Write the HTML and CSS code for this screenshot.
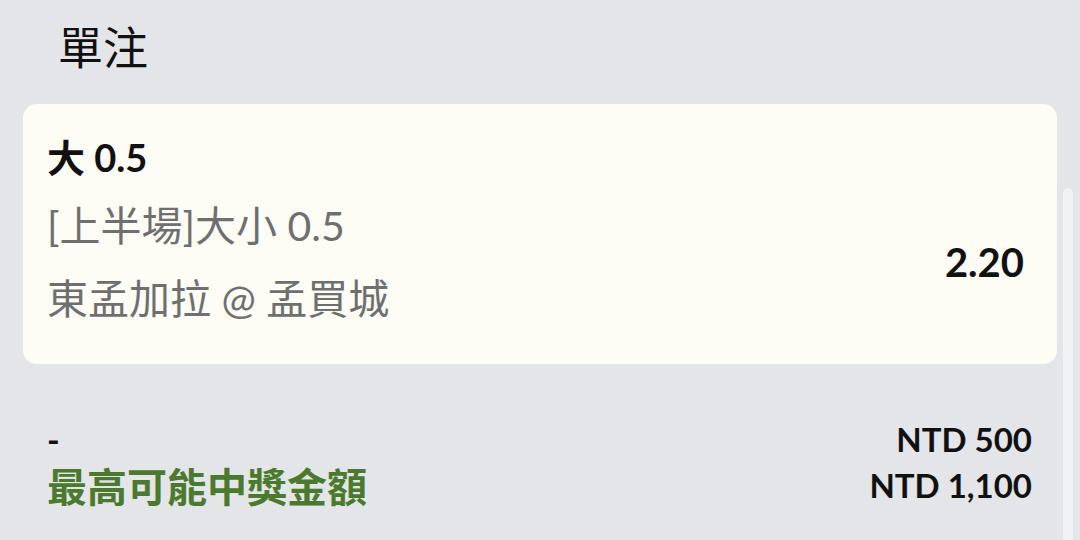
FILE: index.html
```html
<!DOCTYPE html>
<html lang="zh-Hant">
<head>
    <meta charset="UTF-8">
    <title>單注</title>
    <link rel="stylesheet" href="styles.css">
</head>
<body>
    <div class="page">
        <!-- Section title -->
        <h1 class="title">單注</h1>

        <!-- Bet slip card -->
        <div class="card">
            <div class="pick">大 0.5</div>
            <div class="card-row">
                <div class="details">
                    <div class="market">[上半場]大小 0.5</div>
                    <div class="match">東孟加拉 @ 孟買城</div>
                </div>
                <div class="odds">2.20</div>
            </div>
        </div>

        <!-- Stake and potential return -->
        <div class="summary">
            <div class="summary-row">
                <span class="stake-label">-</span>
                <span class="amount">NTD 500</span>
            </div>
            <div class="summary-row">
                <span class="win-label">最高可能中獎金額</span>
                <span class="amount">NTD 1,100</span>
            </div>
        </div>

        <!-- Scrollbar thumb -->
        <div class="scroll-thumb"></div>
    </div>
</body>
</html>
```

FILE: styles.css
```css
/* Page base */
html, body {
    margin: 0;
    padding: 0;
    height: 100%;
}

body {
    background-color: #e4e5e8;
    font-family: "Lato", "Noto Sans CJK TC", sans-serif;
    color: #111111;
}

.page {
    position: relative;
    height: 540px;
    overflow: hidden;
}

/* Section title */
.title {
    margin: 0;
    padding-left: 58px;
    height: 96px;
    line-height: 92px;
    font-family: "Noto Sans CJK TC", sans-serif;
    font-size: 45px;
    font-weight: 400;
    color: #111111;
}

/* Bet card */
.card {
    margin: 8px 23px 0 23px;
    padding: 18px 33px 32px 24px;
    height: 210px;
    background-color: #fdfdf6;
    border-radius: 14px;
}

.pick {
    height: 70px;
    line-height: 70px;
    font-size: 38px;
    font-weight: 700;
    color: #111111;
}

.card-row {
    display: flex;
    align-items: center;
    justify-content: space-between;
    margin-top: 2px;
}

.market,
.match {
    height: 70px;
    line-height: 70px;
    font-size: 41px;
    color: #6f6f6f;
}

.market {
    line-height: 64px;
}

.odds {
    font-size: 40px;
    font-weight: 700;
    color: #111111;
    padding-bottom: 4px;
}

/* Summary rows */
.summary {
    margin-top: 52px;
    padding: 0 48px 0 47px;
}

.summary-row {
    display: flex;
    align-items: center;
    justify-content: space-between;
    height: 46px;
}

.stake-label {
    font-size: 34px;
    font-weight: 700;
}

.win-label {
    font-size: 40px;
    font-weight: 700;
    color: #4b7a2f;
}

.amount {
    font-size: 33px;
    font-weight: 700;
    color: #111111;
}

/* Scrollbar thumb overlay */
.scroll-thumb {
    position: absolute;
    top: 188px;
    right: 7px;
    bottom: 0;
    width: 10px;
    background-color: #f1f2f4;
    border-radius: 5px 5px 0 0;
}
```
